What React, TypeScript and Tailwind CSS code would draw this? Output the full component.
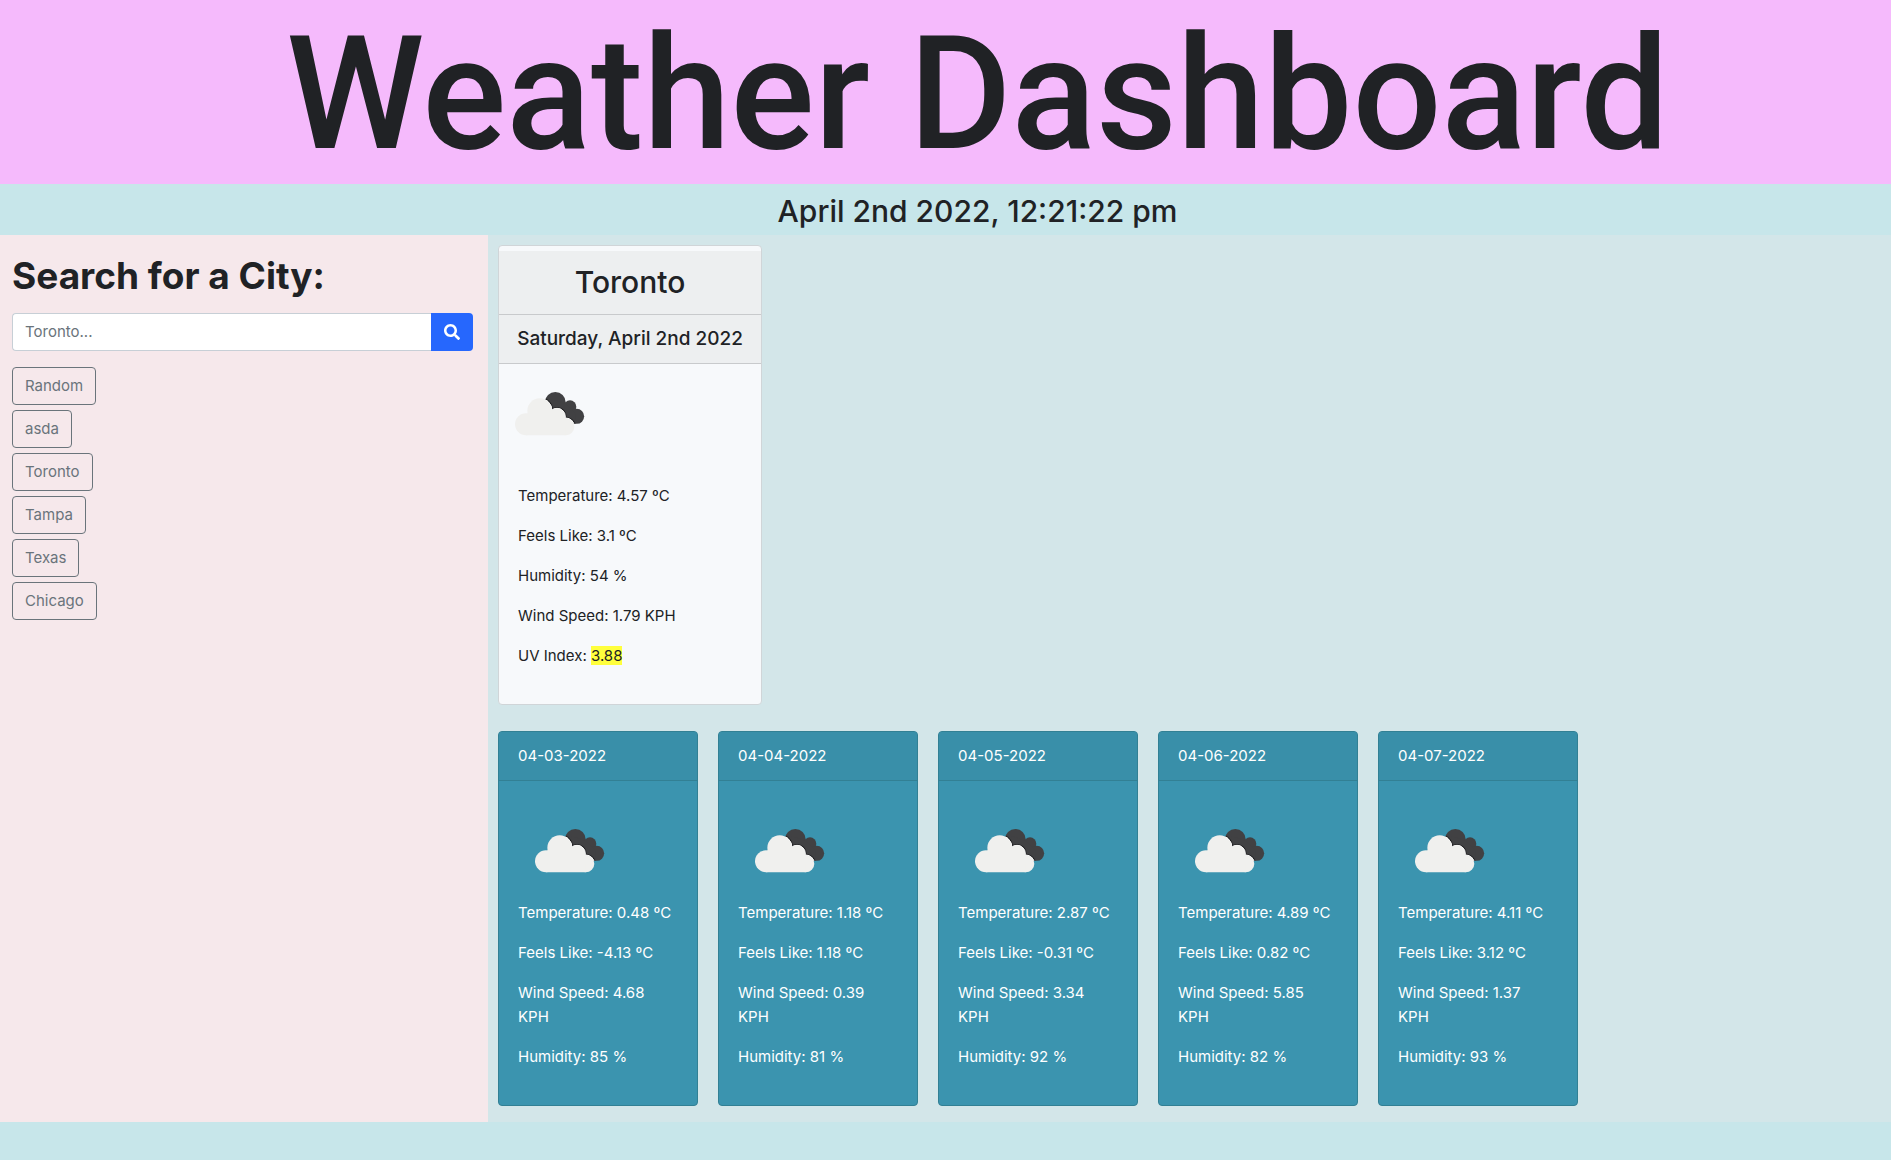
import { useId } from "react";
import { FaSearch } from "react-icons/fa";

const cities = ["Random", "asda", "Toronto", "Tampa", "Texas", "Chicago"];

const forecast = [
  { date: "04-03-2022", temp: "0.48", feels: "-4.13", wind: "4.68", humidity: "85" },
  { date: "04-04-2022", temp: "1.18", feels: "1.18", wind: "0.39", humidity: "81" },
  { date: "04-05-2022", temp: "2.87", feels: "-0.31", wind: "3.34", humidity: "92" },
  { date: "04-06-2022", temp: "4.89", feels: "0.82", wind: "5.85", humidity: "82" },
  { date: "04-07-2022", temp: "4.11", feels: "3.12", wind: "1.37", humidity: "93" },
];

function FrontCloud() {
  return (
    <>
      <circle cx="63" cy="126" r="33" />
      <circle cx="104" cy="85" r="37" />
      <circle cx="156" cy="103" r="25" />
      <circle cx="182" cy="133" r="26" />
      <path d="M63 159h119v-26l-26-40H67v33z" />
    </>
  );
}

function BackCloud() {
  return (
    <>
      <circle cx="151" cy="60" r="31" />
      <circle cx="195" cy="73" r="19" />
      <circle cx="215" cy="102" r="22.5" />
      <path d="M140 50l42 14 30 30 0 30-30 0-50-30z" />
    </>
  );
}

function Clouds() {
  const id = useId();
  return (
    <svg viewBox="30 29 210 132" className="block h-11 w-[70px]" role="img" aria-label="Broken clouds">
      <clipPath id={id}>
        <BackCloud />
      </clipPath>
      <g fill="#414143">
        <BackCloud />
      </g>
      <g clipPath={`url(#${id})`}>
        <g fill="#242426" stroke="#242426" strokeWidth="8">
          <FrontCloud />
        </g>
        <g fill="#ffffff" stroke="#ffffff" strokeWidth="3">
          <FrontCloud />
        </g>
      </g>
      <g fill="#f0f0ee">
        <FrontCloud />
      </g>
    </svg>
  );
}

export default function App() {
  return (
    <div className="min-h-screen bg-[#c7e6ea] font-['Inter',sans-serif] text-[15px] leading-6 text-[#202225]">
      <header>
        <h1 className="bg-[#f5bafc] pt-1 pl-16 text-center font-['Roboto',sans-serif] text-[157px] leading-[180px] font-medium">
          Weather Dashboard
        </h1>
        <p className="pt-2 pb-1 pl-16 text-center text-[30px] leading-[39px] font-medium">
          April 2nd 2022, 12:21:22 pm
        </p>
      </header>

      <div className="flex">
        <aside className="w-[488px] shrink-0 bg-[#f6e8eb] pr-[15px] pl-3">
          <h2 className="pt-3 pb-2 text-[37px] leading-[58px] font-bold">Search for a City:</h2>
          <form className="flex h-[38px]" onSubmit={(e) => e.preventDefault()}>
            <input
              type="text"
              aria-label="City"
              placeholder="Toronto..."
              className="min-w-0 flex-1 rounded-l-[4px] border border-r-0 border-[#c7cfd6] bg-white px-3 outline-none placeholder:text-[#6a747b]"
            />
            <button
              type="submit"
              aria-label="Search"
              className="flex w-[42px] items-center justify-center rounded-r-[4px] bg-[#2667fd] text-base text-white"
            >
              <FaSearch />
            </button>
          </form>
          <div className="mt-4 flex flex-col items-start gap-[5px]">
            {cities.map((city) => (
              <button
                key={city}
                type="button"
                className="h-[38px] rounded-[4px] border border-[#6a747b] px-3 text-[#6a747b]"
              >
                {city}
              </button>
            ))}
          </div>
        </aside>

        <main className="min-w-0 flex-1 bg-[#d3e6e9] px-[10px] pt-[10px] pb-4">
          <section className="w-[264px] rounded-[4px] border border-[#d0d5d8] bg-[#f7f9fb] pt-[5px]">
            <h2 className="border-b border-[#c8cacc] bg-[#edeff0] pt-3 pb-3 text-center text-[30px] leading-[39px] font-medium">
              Toronto
            </h2>
            <h3 className="border-b border-[#c8cacc] bg-[#edeff0] py-3 text-center text-[19px] leading-6 font-medium whitespace-nowrap">
              Saturday, April 2nd 2022
            </h3>
            <div className="pt-7 pl-4">
              <Clouds />
            </div>
            <div className="space-y-4 pt-12 pr-5 pb-9 pl-[19px]">
              <p>Temperature: 4.57 ºC</p>
              <p>Feels Like: 3.1 ºC</p>
              <p>Humidity: 54 %</p>
              <p>Wind Speed: 1.79 KPH</p>
              <p>
                UV Index: <span className="bg-[#ffff3c]">3.88</span>
              </p>
            </div>
          </section>

          <div className="mt-[26px] flex flex-wrap gap-5">
            {forecast.map((day) => (
              <section
                key={day.date}
                className="w-[200px] rounded-[4px] border border-[#328094] bg-[#3b94af] text-white"
              >
                <h3 className="rounded-t-[3px] border-b border-[#328094] bg-[#398fa9] px-[19px] py-3">{day.date}</h3>
                <div className="pt-12 pl-9">
                  <Clouds />
                </div>
                <div className="space-y-4 px-[19px] pt-7 pb-9">
                  <p className="whitespace-nowrap">Temperature: {day.temp} ºC</p>
                  <p>Feels Like: {day.feels} ºC</p>
                  <p>
                    Wind Speed: {day.wind}
                    <br />
                    KPH
                  </p>
                  <p>Humidity: {day.humidity} %</p>
                </div>
              </section>
            ))}
          </div>
        </main>
      </div>
    </div>
  );
}
